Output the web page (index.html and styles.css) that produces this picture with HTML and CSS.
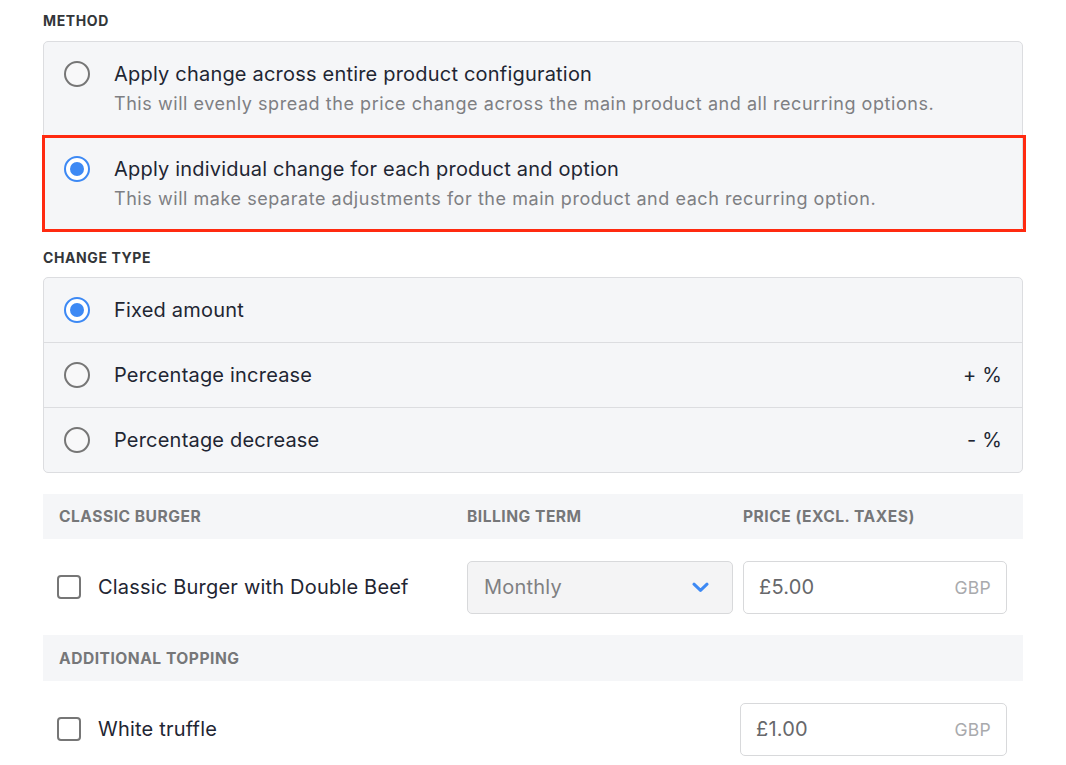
FILE: index.html
```html
<!DOCTYPE html>
<html lang="en">
<head>
<meta charset="utf-8">
<title>Price change</title>
<link rel="stylesheet" href="styles.css">
</head>
<body>
<div class="page">
  <div class="section-label section-label--first">METHOD</div>
  <div class="option-group">
    <div class="method-option">
      <span class="radio"></span>
      <div class="method-text">
        <div class="option-title">Apply change across entire product configuration</div>
        <div class="option-desc">This will evenly spread the price change across the main product and all recurring options.</div>
      </div>
    </div>
    <div class="method-option method-option--highlight">
      <span class="radio radio--checked"></span>
      <div class="method-text">
        <div class="option-title">Apply individual change for each product and option</div>
        <div class="option-desc">This will make separate adjustments for the main product and each recurring option.</div>
      </div>
    </div>
  </div>

  <div class="section-label">CHANGE TYPE</div>
  <div class="option-group">
    <div class="type-option">
      <span class="radio radio--checked"></span>
      <span class="option-title">Fixed amount</span>
    </div>
    <div class="type-option">
      <span class="radio"></span>
      <span class="option-title">Percentage increase</span>
      <span class="type-suffix">+ %</span>
    </div>
    <div class="type-option">
      <span class="radio"></span>
      <span class="option-title">Percentage decrease</span>
      <span class="type-suffix">- %</span>
    </div>
  </div>

  <div class="price-table">
    <div class="table-head">
      <div class="head-cell head-cell--first">CLASSIC BURGER</div>
      <div class="head-cell">BILLING TERM</div>
      <div class="head-cell">PRICE (EXCL. TAXES)</div>
    </div>
    <div class="table-row">
      <label class="item">
        <span class="checkbox"></span>
        <span class="item-name">Classic Burger with Double Beef</span>
      </label>
      <div class="select">
        <span class="select-value">Monthly</span>
        <svg class="chevron" width="17" height="11" viewBox="0 0 17 11" aria-hidden="true">
          <path d="M2 2.2 L8.5 8.4 L15 2.2" fill="none" stroke="#3d89f4" stroke-width="3" stroke-linecap="round" stroke-linejoin="round"/>
        </svg>
      </div>
      <div class="money">
        <span class="money-value">£5.00</span>
        <span class="money-currency">GBP</span>
      </div>
    </div>

    <div class="table-head table-head--single">
      <div class="head-cell head-cell--first">ADDITIONAL TOPPING</div>
    </div>
    <div class="table-row table-row--single">
      <label class="item">
        <span class="checkbox"></span>
        <span class="item-name">White truffle</span>
      </label>
      <div class="money">
        <span class="money-value">£1.00</span>
        <span class="money-currency">GBP</span>
      </div>
    </div>
  </div>
</div>
</body>
</html>
```

FILE: styles.css
```css
* {
  box-sizing: border-box;
}

html, body {
  margin: 0;
  padding: 0;
  background: #ffffff;
}

body {
  font-family: "Inter", "Liberation Sans", sans-serif;
  color: #1f2633;
}

.page {
  width: 980px;
  margin-left: 43px;
  padding-bottom: 40px;
}

.section-label {
  font-size: 14px;
  font-weight: 700;
  letter-spacing: 0.6px;
  line-height: 16px;
  color: #333639;
  margin-top: 19px;
  margin-bottom: 11px;
}

.section-label--first {
  margin-top: 13px;
  margin-bottom: 12px;
}

.option-group {
  border: 1px solid #dcdde0;
  border-radius: 5px;
  background: #f5f6f8;
}

.method-option {
  position: relative;
  display: flex;
  align-items: flex-start;
  gap: 24px;
  padding: 17px 20px 16px;
}

.method-option--highlight {
  padding-top: 19px;
}

.method-option--highlight::after {
  content: "";
  position: absolute;
  top: 0;
  left: -2px;
  right: -4px;
  bottom: -2px;
  border: 3px solid #ff2a10;
  pointer-events: none;
}

.method-option .radio {
  margin-top: 2px;
}

.option-title {
  font-size: 20px;
  letter-spacing: 0.2px;
  line-height: 30px;
  color: #1f2633;
}

.option-desc {
  font-size: 18px;
  letter-spacing: 0.55px;
  line-height: 30px;
  color: #7e7f83;
}

.radio {
  flex: none;
  width: 26px;
  height: 26px;
  border-radius: 50%;
  border: 2px solid #767676;
  background: #f8f8f9;
  position: relative;
}

.radio--checked {
  border-color: #3d89f4;
  background: #ffffff;
}

.radio--checked::before {
  content: "";
  position: absolute;
  left: 4px;
  top: 4px;
  width: 14px;
  height: 14px;
  border-radius: 50%;
  background: #3d89f4;
}

.type-option {
  display: flex;
  align-items: center;
  gap: 24px;
  height: 64px;
  padding: 0 20px 0 20px;
}

.type-option + .type-option {
  height: 65px;
  border-top: 1px solid #dcdde0;
}

.type-suffix {
  margin-left: auto;
  font-size: 20px;
  letter-spacing: 0.2px;
  color: #1f2633;
}

.price-table {
  margin-top: 21px;
}

.table-head,
.table-row {
  display: grid;
  grid-template-columns: 414px 266px 264px;
  column-gap: 10px;
  align-items: center;
}

.table-head {
  height: 45px;
  background: #f5f6f8;
}

.table-head--single {
  height: 46px;
}

.head-cell {
  font-size: 15.6px;
  font-weight: 700;
  letter-spacing: 0.5px;
  color: #767779;
}

.head-cell--first {
  padding-left: 16px;
}

.table-row {
  height: 96px;
}

.table-row--single {
  grid-template-columns: 1fr 267px;
  column-gap: 0;
  padding-right: 16px;
}

.item {
  display: flex;
  align-items: center;
  gap: 17px;
  padding-left: 14px;
}

.checkbox {
  flex: none;
  width: 24px;
  height: 24px;
  border: 2px solid #767676;
  border-radius: 4px;
  background: #ffffff;
}

.item-name {
  font-size: 20px;
  letter-spacing: 0.2px;
  color: #1f2633;
}

.select {
  display: flex;
  align-items: center;
  justify-content: space-between;
  height: 53px;
  padding: 0 23px 0 16px;
  background: #f4f4f5;
  border: 1px solid #d8d9db;
  border-radius: 5px;
}

.select-value {
  font-size: 20px;
  letter-spacing: 0.2px;
  color: #7f8082;
}

.chevron {
  display: block;
}

.money {
  display: flex;
  align-items: center;
  justify-content: space-between;
  height: 53px;
  padding: 0 15px 0 15px;
  background: #ffffff;
  border: 1px solid #d8d9db;
  border-radius: 5px;
}

.money-value {
  font-size: 20px;
  letter-spacing: 0.2px;
  color: #67686b;
}

.money-currency {
  font-size: 17.5px;
  letter-spacing: 0.3px;
  color: #a9aaad;
}
```
